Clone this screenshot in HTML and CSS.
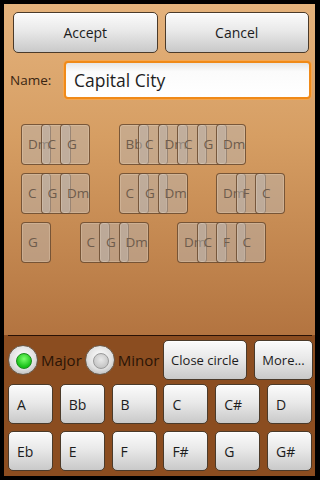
FILE: index.html
```html
<!DOCTYPE html>
<html>
<head>
<meta charset="utf-8">
<link rel="stylesheet" href="styles.css">
</head>
<body>
<div class="screen">
  <div class="upper">
    <div class="top-buttons">
      <button class="btn big">Accept</button>
      <button class="btn big">Cancel</button>
    </div>
    <div class="name-row">
      <span class="name-label">Name:</span>
      <div class="name-input">Capital City</div>
    </div>
    <div class="chords">
      <div class="group"><div class="card">Dm</div><div class="card">C</div><div class="card">G</div></div>
      <div class="group"><div class="card">Bb</div><div class="card">C</div><div class="card">Dm</div><div class="card">C</div><div class="card">G</div><div class="card">Dm</div></div>
      <div class="group"><div class="card">C</div><div class="card">G</div><div class="card">Dm</div></div>
      <div class="group"><div class="card">C</div><div class="card">G</div><div class="card">Dm</div></div>
      <div class="group"><div class="card">Dm</div><div class="card">F</div><div class="card">C</div></div>
      <div class="group"><div class="card">G</div></div>
      <div class="group"><div class="card">C</div><div class="card">G</div><div class="card">Dm</div></div>
      <div class="group"><div class="card">Dm</div><div class="card">C</div><div class="card">F</div><div class="card">C</div></div>
    </div>
  </div>
  <div class="lower">
    <div class="divider"></div>
    <div class="mode-row">
      <label class="radio"><span class="dot on"></span>Major</label>
      <label class="radio"><span class="dot"></span>Minor</label>
      <button class="btn mid close">Close circle</button>
      <button class="btn mid more">More...</button>
    </div>
    <div class="keys">
      <button class="btn key">A</button>
      <button class="btn key">Bb</button>
      <button class="btn key">B</button>
      <button class="btn key">C</button>
      <button class="btn key">C#</button>
      <button class="btn key">D</button>
      <button class="btn key">Eb</button>
      <button class="btn key">E</button>
      <button class="btn key">F</button>
      <button class="btn key">F#</button>
      <button class="btn key">G</button>
      <button class="btn key">G#</button>
    </div>
  </div>
</div>
</body>
</html>
```
FILE: styles.css
```css
* { box-sizing: border-box; }
html, body { margin: 0; padding: 0; background: #000; }
body { width: 320px; height: 480px; overflow: hidden; font-family: "Open Sans", "Noto Sans", sans-serif; }
.screen {
  margin: 4px 5px 4px 4px;
  width: 311px;
  height: 472px;
  display: flex;
  flex-direction: column;
}
.upper {
  height: 331px;
  background: linear-gradient(#e4b27c 0%, #d69e63 40%, #b37440 100%);
  display: flex;
  flex-direction: column;
}
.btn {
  font-family: "Open Sans", "Noto Sans", sans-serif;
  color: #1c1c1c;
  border: 1px solid #4a3a2a;
  border-radius: 5px;
  background: linear-gradient(#fbfbfb 0%, #e9e9e9 45%, #c9c9c9 100%);
  box-shadow: inset 0 1px 0 #fff;
  padding: 0;
  margin: 0;
}
.top-buttons {
  display: flex;
  gap: 7px;
  padding: 8px 6px 0 9px;
}
.btn.big { flex: 1; height: 41px; font-size: 14px; }
.name-row {
  display: flex;
  align-items: center;
  padding: 8px 4px 0 6px;
}
.name-label { width: 54px; font-size: 13.5px; color: #3a2512; }
.name-input {
  flex: 1;
  height: 38px;
  border: 2px solid #f08a18;
  border-radius: 4px;
  box-shadow: 0 0 0 1px #f5a650;
  background: linear-gradient(#e6e6e6 0%, #fbfbfb 25%, #ffffff 100%);
  font-size: 17.5px;
  color: #1e1e1e;
  padding: 3px 0 0 8px;
  line-height: 28px;
}
.chords {
  display: flex;
  flex-wrap: wrap;
  column-gap: 28.5px;
  row-gap: 8px;
  padding: 25px 0 0 17px;
}
.group { display: flex; height: 41px; }
.card {
  width: 30px;
  height: 41px;
  border: 1px solid rgba(95, 60, 30, 0.75);
  border-radius: 4px;
  background: rgba(185, 180, 175, 0.5);
  box-shadow: inset 0 0 0 1px rgba(255, 240, 220, 0.2);
  font-size: 13.5px;
  color: #6e5c4c;
  padding-left: 6px;
  line-height: 39px;
  white-space: nowrap;
  overflow: hidden;
}
.card + .card { margin-left: -10.5px; }
.lower {
  flex: 1;
  background: #8b4d20;
  display: flex;
  flex-direction: column;
  padding: 0 2px 0 4px;
}
.divider {
  height: 1px;
  background: #2a1205;
  margin: 0 1px 0 0;
}
.mode-row {
  display: flex;
  align-items: center;
  height: 44px;
  padding: 3px 0 0 0;
}
.radio {
  display: flex;
  align-items: center;
  font-size: 15px;
  color: #2a1406;
}
.radio + .radio { margin-left: 3px; }
.dot {
  width: 30px;
  height: 30px;
  border-radius: 50%;
  background: radial-gradient(circle at 50% 40%, #ffffff 0%, #e0e0e0 55%, #a8a8a8 100%);
  border: 1px solid #6a5a4a;
  margin: 0 3px 0 0;
  position: relative;
  display: inline-block;
}
.dot::after {
  content: "";
  position: absolute;
  left: 7px; top: 7px;
  width: 14px; height: 14px;
  border-radius: 50%;
  background: radial-gradient(circle at 50% 40%, #e8e8e8, #b8b8b8);
  border: 1px solid #9a9a9a;
}
.dot.on::after {
  background: radial-gradient(circle at 50% 35%, #7cff6c, #18c018 70%);
  border-color: #1a8a1a;
}
.btn.mid { height: 40px; font-size: 13px; }
.close { width: 84px; margin-left: auto; }
.more { width: 59px; margin-left: 7px; }
.keys {
  display: grid;
  grid-template-columns: repeat(6, 45px);
  grid-auto-rows: 40px;
  column-gap: 6.8px;
  row-gap: 7px;
  padding: 4px 0 0 0;
}
.btn.key {
  font-size: 14px;
  text-align: left;
  padding-left: 8px;
}
```
